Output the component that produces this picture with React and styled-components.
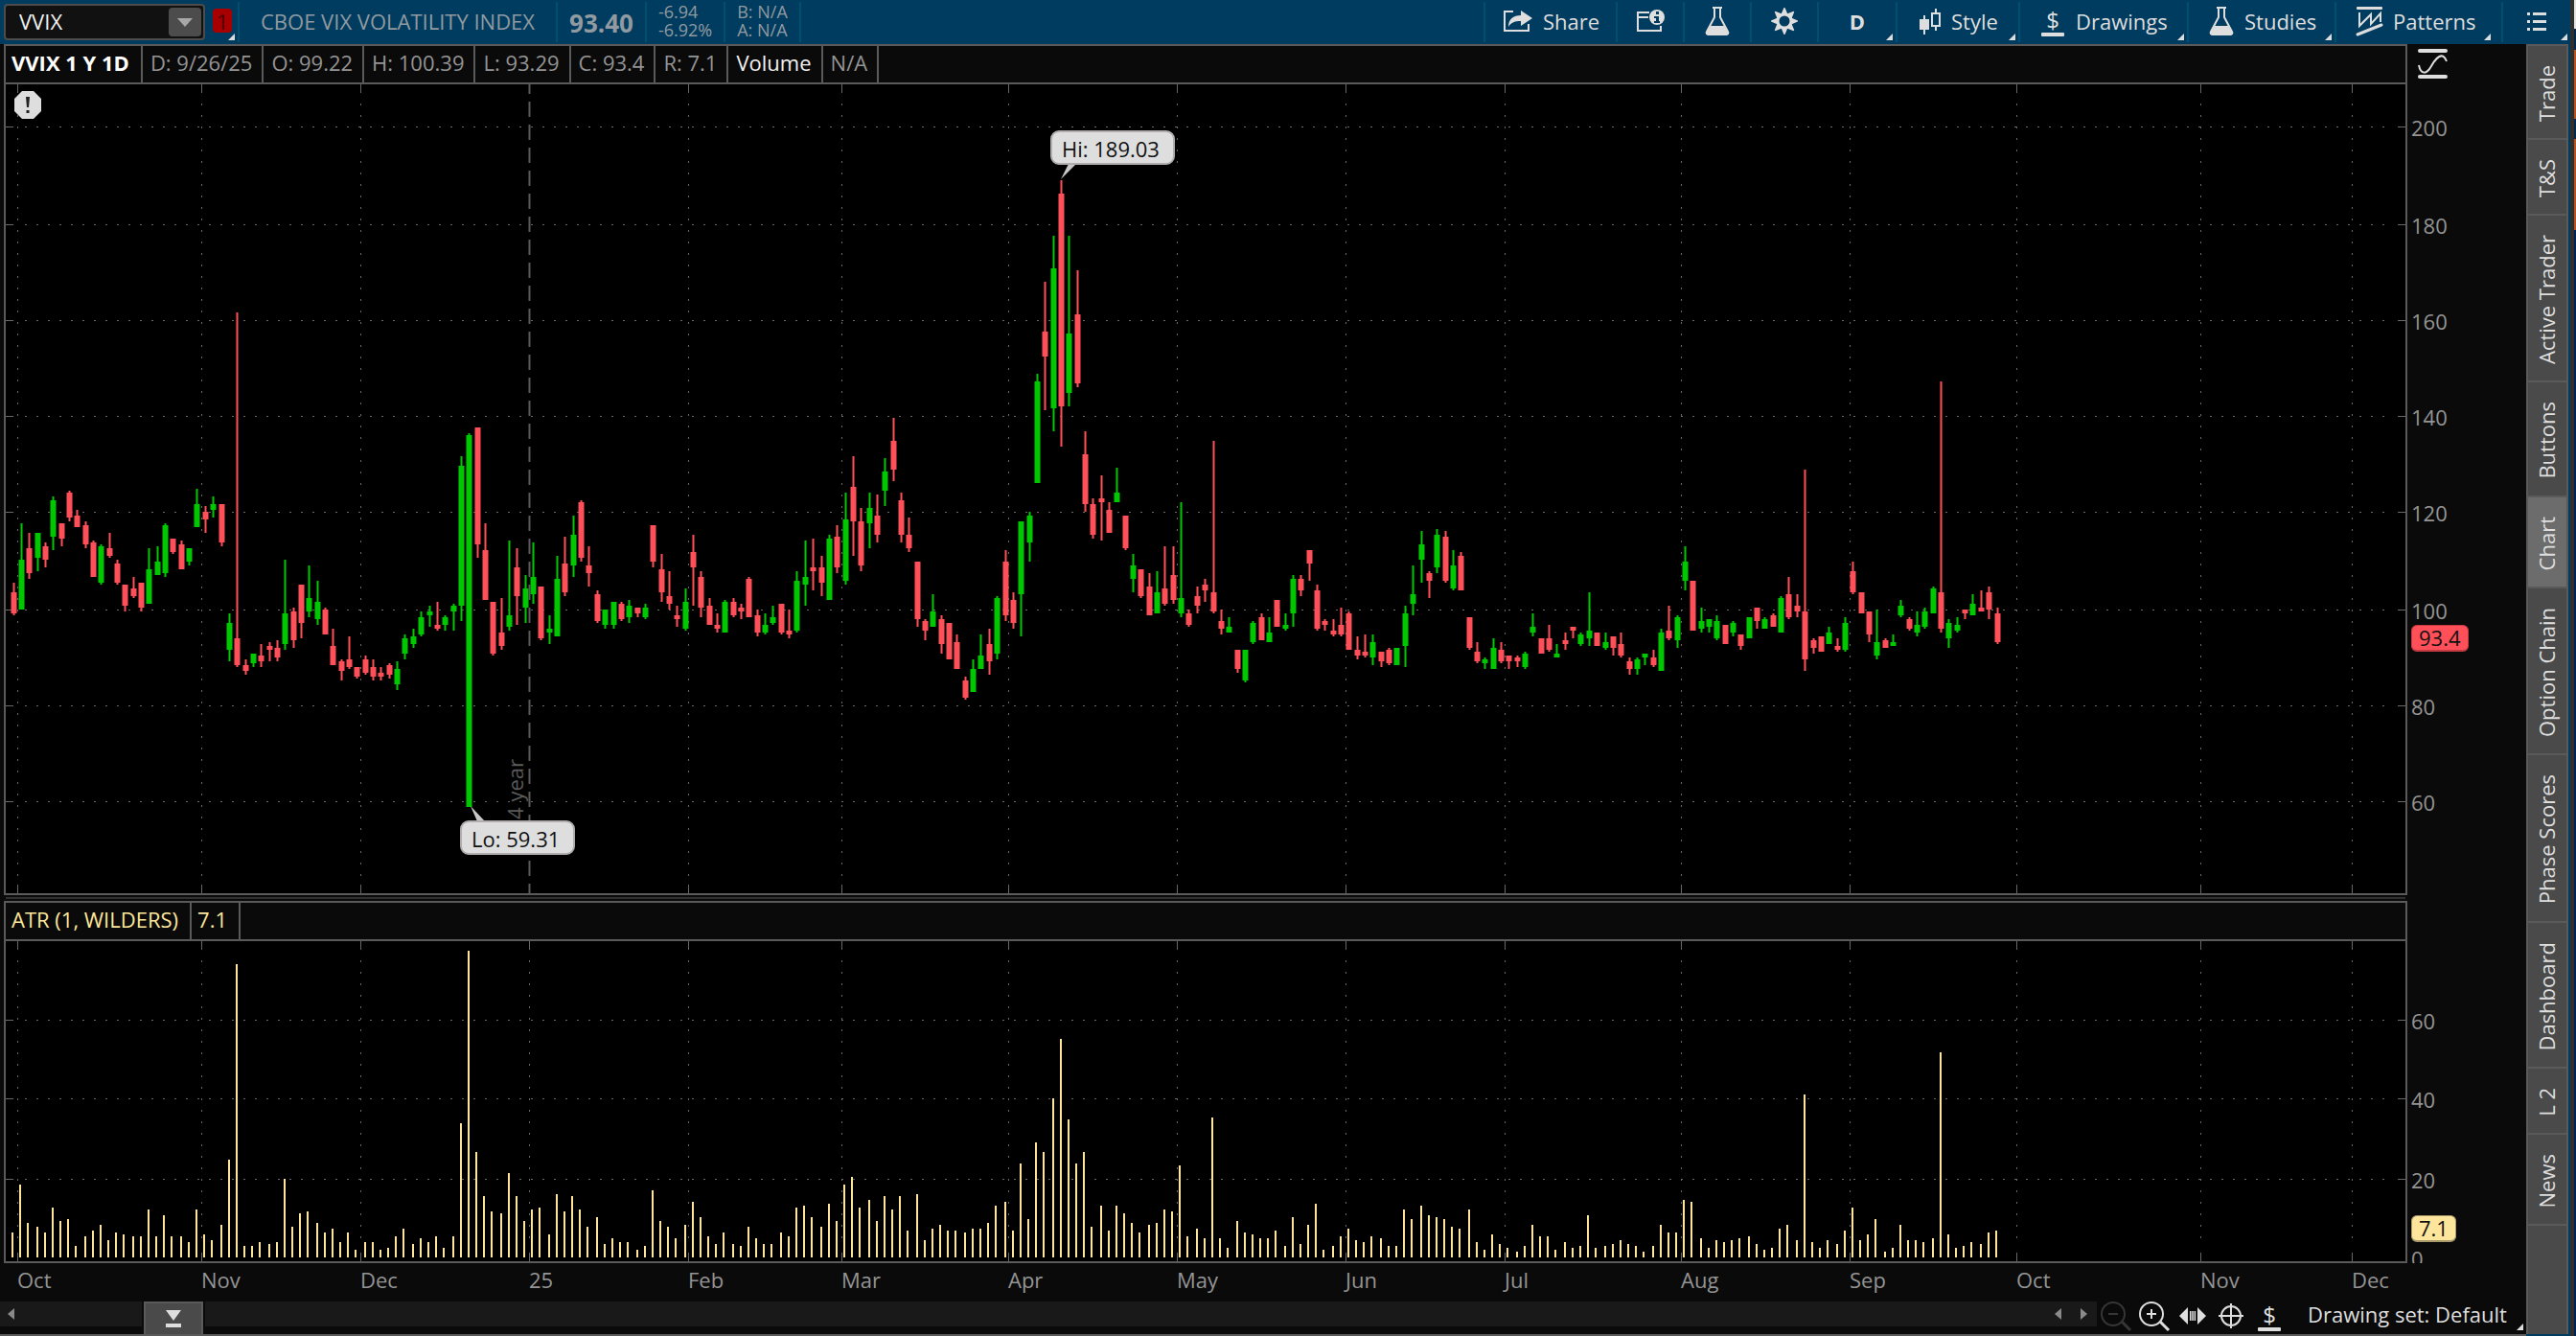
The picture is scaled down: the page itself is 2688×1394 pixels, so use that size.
import React from "react";
import styled, { createGlobalStyle, css } from "styled-components";

/* ---------- data ---------- */

// One entry per session: direction, then high, body top, body bottom, low (2px chart rows).
const CANDLES = `r304,309,320,321 g273,292,318,318 r278,286,299,302 g278,278,291,298 r283,285,292,296
g259,261,280,287 r273,273,281,285 r256,257,270,272 r266,269,275,275 r272,274,284,286
r282,283,301,301 g284,285,304,305 r278,286,290,291 r292,294,304,305 r305,305,316,319
r301,307,311,312 r304,304,317,319 g286,297,315,315 g285,293,300,300 g273,274,299,301
r281,281,288,289 r282,284,297,297 g286,286,293,295 g255,263,275,275 r264,267,271,278
g259,263,266,270 r263,263,283,285 g320,325,339,345 r163,333,347,348 r344,347,350,352
g341,341,346,348 r336,342,345,348 r335,337,339,345 r334,338,343,345 g292,320,336,339
r317,319,334,338 r305,305,325,333 g295,312,319,322 g303,314,323,326 r317,318,331,331
r328,337,347,347 r344,345,350,355 r332,344,348,349 r348,348,353,354 r342,344,351,352
r344,348,353,355 r348,351,353,355 r346,347,352,354 g345,349,357,360 g331,333,341,344
g328,332,336,338 g319,322,331,332 g316,319,321,327 r314,326,328,329 g321,322,326,329
g315,316,319,329 g238,243,316,324 g226,227,421,421 r223,223,284,291 r273,287,313,313
r314,314,341,342 r312,330,337,339 g282,321,327,329 r286,296,311,326 g300,307,317,325
g283,301,310,315 r306,306,333,334 g321,328,330,336 g290,302,332,332 r280,294,309,311
g269,279,295,301 r261,262,291,293 r285,295,299,306 r308,310,324,325 g318,318,326,328
g314,314,326,328 r314,315,323,324 g313,316,322,325 r317,317,320,322 g315,317,322,323
r274,274,293,296 r289,297,309,314 r298,311,315,318 r316,321,323,327 g307,314,328,329
r279,288,296,316 r298,301,317,322 r312,316,326,326 r320,326,328,330 g313,314,330,330
r312,314,321,322 r315,317,319,323 r301,302,322,322 r318,321,330,332 g320,326,330,331
g316,322,325,326 r315,315,330,331 r318,329,331,333 g298,303,329,330 g282,301,305,316
r281,296,298,308 r290,296,304,311 g279,281,313,313 r274,280,296,299 g257,271,303,305
r238,254,272,290 r265,272,295,298 g257,265,273,286 r258,269,279,283 g239,246,256,264
r218,230,245,251 r257,261,279,283 r270,279,286,288 r293,293,323,327 r323,324,329,334
g310,319,327,327 r321,323,336,341 r325,325,344,344 r331,335,349,349 r353,355,364,365
g344,349,361,361 g331,342,349,349 r328,336,345,352 g311,312,341,344 r287,293,321,324
r309,313,325,328 g272,272,310,332 g267,269,283,293 g195,199,252,252 r147,173,186,214
g123,140,213,225 r94,101,212,233 g123,174,205,212 r141,164,200,202 r225,237,263,267
r260,263,279,281 r248,260,262,282 r262,266,278,278 g244,257,262,262 r269,269,286,287
g289,295,302,309 r297,297,311,312 r299,306,321,321 g298,309,320,320 r285,307,315,316
r285,300,313,315 g262,312,320,322 r318,320,326,327 r306,311,316,320 r302,305,308,314
r230,309,319,320 r318,324,328,331 g322,327,330,330 r339,339,349,351 g339,339,355,356
g324,325,335,336 r320,322,334,334 g322,330,335,335 r313,313,327,327 g320,326,328,329
g300,302,320,327 r300,302,308,311 r287,287,294,303 r305,308,328,329 r323,324,326,329
r323,329,331,332 r317,326,331,332 r319,320,339,339 r332,339,342,344 r331,340,342,343
g331,335,343,347 r340,340,345,348 r338,339,346,347 g338,338,347,347 g316,320,337,348
g295,310,315,321 g277,284,292,304 r298,299,303,312 g276,279,296,299 r277,280,303,304
g287,295,307,308 r288,290,308,308 r322,322,338,339 r335,340,345,346 g343,344,346,349
g333,338,349,349 r335,339,345,346 r342,342,345,349 r342,343,345,348 g340,341,348,349
g320,327,330,332 r333,333,341,341 r326,333,339,340 g336,341,343,343 r330,334,336,339
r327,327,329,333 g330,331,336,337 g309,329,333,337 r330,330,337,337 g330,335,338,339
r332,332,338,342 r330,336,342,343 r343,345,349,352 g343,344,349,352 g341,341,343,347
r339,343,347,348 g328,330,350,350 r316,329,333,334 g321,322,334,338 g285,293,303,308
r303,303,329,329 g317,324,328,330 g323,323,327,330 g321,324,333,334 r326,326,336,336
g324,325,330,332 r331,331,337,339 g322,322,333,333 r317,317,324,328 g322,323,328,328
r320,321,327,327 g311,312,330,330 r301,310,322,323 r310,316,319,322 r245,319,344,350
r333,334,338,341 r332,332,340,340 g327,330,336,336 r333,337,339,340 g322,325,339,340
r293,298,309,310 r309,309,320,320 r319,319,331,335 g318,335,342,344 r333,334,338,338
g331,335,337,337 g313,316,321,322 r322,323,328,329 g319,326,330,332 g317,319,327,328
g306,307,320,320 r199,309,328,330 g323,325,333,338 g322,326,329,330 r318,318,320,323
g310,315,321,321 r308,317,319,319 r306,309,318,323 r317,320,335,336`
  .split(/\s+/)
  .map((s) => {
    const [high, top, bottom, low] = s.slice(1).split(",").map(Number);
    return { up: s[0] === "g", high, top, bottom, low };
  });

const TRUE_RANGE = [
  13, 38, 18, 16, 13, 26, 19, 20, 6, 11, 14, 17, 9, 13, 12, 11, 11, 25, 11, 22, 11, 11, 8, 25, 12,
  9, 17, 51, 153, 6, 6, 8, 7, 8, 41, 16, 23, 24, 18, 13, 15, 8, 13, 4, 8, 8, 4, 5, 11, 15,
  7, 10, 8, 11, 5, 11, 70, 160, 55, 32, 24, 23, 44, 32, 19, 25, 26, 12, 33, 24, 32, 25, 16, 21, 7,
  10, 8, 8, 4, 6, 35, 19, 16, 10, 17, 29, 21, 11, 7, 13, 7, 6, 16, 10, 7, 7, 13, 11, 26, 27,
  21, 16, 28, 19, 38, 42, 26, 30, 19, 32, 25, 32, 14, 33, 9, 15, 17, 14, 14, 13, 15, 15, 18, 27, 29,
  14, 49, 20, 60, 55, 83, 114, 72, 49, 55, 16, 27, 14, 27, 23, 18, 13, 17, 18, 25, 24, 48, 11, 15, 10,
  73, 10, 5, 19, 13, 12, 10, 10, 14, 6, 21, 7, 17, 28, 4, 6, 11, 15, 9, 8, 11, 10, 6, 6, 25,
  20, 27, 22, 21, 20, 16, 15, 25, 8, 4, 12, 7, 5, 3, 6, 17, 11, 11, 4, 8, 5, 6, 22, 5, 6,
  7, 9, 7, 6, 3, 6, 17, 13, 13, 30, 29, 10, 5, 9, 8, 9, 10, 11, 7, 4, 5, 15, 17, 9, 85,
  8, 5, 9, 7, 14, 26, 9, 12, 20, 3, 5, 17, 9, 9, 8, 10, 107, 12, 5, 6, 8, 7, 13, 14,
];

const MONTHS = [
  [18, "Oct"], [210, "Nov"], [376, "Dec"], [552, "25"], [718, "Feb"], [878, "Mar"],
  [1052, "Apr"], [1228, "May"], [1404, "Jun"], [1570, "Jul"], [1754, "Aug"],
  [1930, "Sep"], [2104, "Oct"], [2296, "Nov"], [2454, "Dec"],
];

const PRICE_TICKS = [
  [132, "200"], [234, "180"], [334, "160"], [434, "140"],
  [534, "120"], [636, "100"], [736, "80"], [836, "60"],
];
const ATR_TICKS = [[1064, "60"], [1146, "40"], [1230, "20"], [1312, "0"]];

const X0 = 6;
const PLOT_W = 2504;
const PRICE = { top: 88, height: 844 };
const ATR = { top: 982, height: 334 };
const STEP = 2070 / 248;

const pctX = (x) => `${((x - X0) / PLOT_W) * 100}%`;
const pctY = (y, plot) => `${((y - plot.top) / plot.height) * 100}%`;

/* ---------- theme ---------- */

const c = {
  blue: "#003c5f",
  blueLine: "#004f6e",
  panel: "#0a0a0a",
  line: "#5a5a5a",
  tab: "#4a4a4a",
  tabOn: "#6c6c6c",
  grey: "#949494",
  light: "#dedede",
  gold: "#fde69b",
  red: "#ff4f58",
  green: "#00c800",
};

const Global = createGlobalStyle`
  *, *::before, *::after { box-sizing: border-box; }
  html, body { margin: 0; background: ${c.panel}; }
  body, button, input {
    font-family: "Open Sans", "Noto Sans", sans-serif;
    font-size: 22px;
    line-height: 30px;
  }
  button { border: 0; padding: 0; margin: 0; background: none; color: inherit; cursor: pointer; }
  svg { display: block; overflow: visible; }
`;

/* ---------- window ---------- */

const Desktop = styled.div`
  display: flex;
  height: 100vh;
  color: ${c.light};
  overflow: hidden;
`;
const Window = styled.div`
  flex: 1;
  min-width: 0;
  display: flex;
  flex-direction: column;
  background: ${c.blue};
`;
const WindowEdge = styled.div`
  flex: 0 0 4px;
  background: #303030;
`;
const DesktopStrip = styled.div`
  flex: 0 0 2px;
  background: linear-gradient(
    #e4e4e4 0 30px, #06264a 30px 52px, #b4531f 52px 124px,
    #06264a 124px 145px, #b4531f 145px 240px, #03234f 240px
  );
`;

/* ---------- toolbar ---------- */

const Toolbar = styled.header`
  flex: 0 0 46px;
  min-height: 0;
  display: flex;
  padding: 2px 0;
`;
const SymbolBox = styled.div`
  display: flex;
  width: 210px;
  margin: 2px 8px 2px 4px;
  padding: 2px;
  background: #111;
  border: 2px solid #4c4c4c;
  border-radius: 4px;
`;
const SymbolInput = styled.input`
  flex: 1;
  min-width: 0;
  height: 30px;
  padding: 0 0 2px 12px;
  border: 0;
  outline: 0;
  background: transparent;
  color: #f0f0f0;
`;
const SymbolDrop = styled.button`
  width: 34px;
  display: grid;
  place-items: center;
  background: #4c4c4c;
  border-radius: 4px;
`;
const cornerMark = css`
  &::after {
    content: "";
    position: absolute;
    right: ${(p) => p.$mark ?? 3}px;
    bottom: 2px;
    border-left: 7px solid transparent;
    border-bottom: 7px solid ${c.light};
  }
`;
const LinkCell = styled.div`
  position: relative;
  width: 28px;
  border-right: 2px solid ${c.blueLine};
  ${cornerMark}
`;
const LinkBadge = styled.button`
  width: 20px;
  height: 25px;
  margin-top: 7px;
  line-height: 24px;
  background: #a80000;
  border-radius: 4px;
  color: #4c0000;
`;
const QuoteCell = styled.div`
  display: flex;
  flex-direction: column;
  justify-content: center;
  padding: 0 ${(p) => p.$pad ?? 12}px 2px;
  border-right: 2px solid ${c.blueLine};
  color: #919aa0;
  white-space: nowrap;
`;
const LastPrice = styled.strong`
  font-size: 26px;
  line-height: 34px;
  padding-top: 4px;
`;
const Small = styled.span`
  font-size: 18px;
  line-height: 19px;
`;
const Spacer = styled.div`
  flex: 1;
`;
const Tool = styled.button`
  position: relative;
  display: flex;
  align-items: center;
  justify-content: ${(p) => (p.$left ? "flex-start" : "center")};
  gap: 11px;
  min-width: ${(p) => p.$min ?? 70}px;
  padding: 0 0 2px ${(p) => p.$left ?? 0}px;
  border-left: 2px solid ${c.blueLine};
  white-space: nowrap;
  ${(p) => p.$menu && cornerMark}
`;

/* ---------- workspace ---------- */

const Body = styled.div`
  flex: 1;
  min-height: 0;
  display: flex;
  padding-right: 2px;
`;
const Workspace = styled.main`
  flex: 1;
  min-width: 0;
  display: flex;
  flex-direction: column;
  background: ${c.panel};
  border-bottom: 2px solid ${c.line};
`;
const Panel = styled.section`
  flex: ${(p) => p.$grow} 1 0;
  min-height: 0;
  display: flex;
  padding-left: 4px;
`;
const PlotFrame = styled.div`
  flex: 1;
  min-width: 0;
  display: flex;
  flex-direction: column;
  border: 2px solid ${c.line};
`;
const Legend = styled.div`
  flex: 0 0 40px;
  display: flex;
  border-bottom: 2px solid ${c.line};
`;
const LegendCell = styled.span`
  padding: ${(p) => (p.$wide ? "0 12px 0 6px" : "0 10px 0 8px")};
  line-height: 34px;
  border-right: 2px solid ${c.line};
  color: ${(p) => p.$color ?? c.grey};
  font-weight: ${(p) => (p.$bold ? 700 : 400)};
  white-space: nowrap;
`;
const Plot = styled.div`
  position: relative;
  flex: 1;
  min-height: 0;
  background: #000;
  > svg { width: 100%; height: 100%; position: absolute; inset: 0; }
`;
const Divider = styled.div`
  flex: 0 0 6px;
  margin: 0 126px 0 6px;
  padding: 2px 0;
  background: #303030 content-box;
`;
const Alert = styled.button`
  position: absolute;
  left: 9px;
  top: 7px;
`;
const Callout = styled.div`
  position: absolute;
  height: 36px;
  padding: 0 14px 0 10px;
  line-height: 34px;
  background: ${c.light};
  border: 2px solid #b0acac;
  border-radius: 9px;
  color: #111;
  white-space: nowrap;
`;
const YearTag = styled.span`
  position: absolute;
  writing-mode: vertical-rl;
  transform: rotate(180deg);
  line-height: 28px;
  color: ${c.line};
`;

const Axis = styled.aside`
  flex: 0 0 124px;
  display: flex;
  flex-direction: column;
`;
const AxisHead = styled.div`
  flex: 0 0 42px;
  padding: 4px 0 0 11px;
`;
const Scale = styled.div`
  position: relative;
  flex: 1;
  margin-bottom: 2px;
  ${(p) => p.$clip && "clip-path: inset(0 0 -2px 0);"}
`;
const Tick = styled.span`
  position: absolute;
  left: 4px;
  transform: translateY(-50%);
  line-height: 28px;
  padding-top: 2px;
  color: ${c.grey};
`;
const PriceTag = styled.output`
  position: absolute;
  left: 4px;
  transform: translateY(-50%);
  height: 28px;
  padding: 0 7px;
  line-height: 24px;
  border-radius: 6px;
  background: ${(p) => p.$bg};
  border: 1px solid ${(p) => p.$edge};
  border-bottom-width: 2px;
  color: #111;
`;

const TimeAxis = styled.div`
  flex: 0 0 40px;
  position: relative;
  margin: 0 126px 0 6px;
`;
const Month = styled.span`
  position: absolute;
  top: 0;
  line-height: 34px;
  color: ${c.grey};
`;

const Footer = styled.footer`
  flex: 0 0 34px;
  display: flex;
  align-items: flex-start;
`;
const Track = styled.div`
  flex: ${(p) => (p.$fill ? "1" : "0 0 148px")};
  height: 26px;
  display: flex;
  align-items: center;
  justify-content: ${(p) => (p.$fill ? "flex-end" : "flex-start")};
  gap: 20px;
  padding: 0 10px 0 8px;
  background: #191919;
`;
const Thumb = styled.button`
  flex: 0 0 62px;
  height: 34px;
  margin: 0 2px;
  display: grid;
  place-items: center;
  background: ${c.tab};
  border: 2px solid ${c.line};
  border-bottom: 0;
`;
const Controls = styled.div`
  flex: 0 0 448px;
  height: 30px;
  display: flex;
  align-items: center;
`;
const IconButton = styled.button`
  width: 40px;
  display: flex;
  justify-content: center;
`;
const DrawingSet = styled.button`
  position: relative;
  flex: 1;
  height: 34px;
  padding: 0 0 4px 20px;
  text-align: left;
  line-height: 28px;
  white-space: nowrap;
  ${cornerMark}
`;

/* ---------- side tabs ---------- */

const Side = styled.nav`
  flex: 0 0 44px;
  display: flex;
  flex-direction: column;
  margin-bottom: 2px;
  background: ${c.tab};
  border: 2px solid ${c.line};
  border-bottom: 0;
`;
const SideTab = styled.button`
  display: flex;
  justify-content: center;
  align-items: center;
  padding: 20px 0 17px;
  border-bottom: 2px solid ${c.line};
  background: ${(p) => (p.$on ? c.tabOn : "transparent")};
  span {
    writing-mode: vertical-rl;
    transform: rotate(180deg);
    line-height: 32px;
    padding-left: 2px;
    white-space: nowrap;
  }
`;

/* ---------- icons ---------- */

const Icon = ({ w, h, children, color = c.light }) => (
  <svg width={w} height={h} viewBox={`0 0 ${w} ${h}`} fill={color} stroke="none" aria-hidden="true">
    {children}
  </svg>
);
const line = (extra) => ({ fill: "none", stroke: c.light, strokeWidth: 2, ...extra });

const ShareIcon = () => (
  <Icon w={30} h={22}>
    <path d="M10 1H1v20h25v-7" {...line()} />
    <path d="M18 0l12 8-12 8v-5C12 11 8 12 5 17 5 9 10 5 18 5z" />
  </Icon>
);
const InfoCardIcon = () => (
  <Icon w={30} h={24}>
    <path d="M14 3H2v19h24v-5M2 8h11" {...line()} />
    <circle cx="22" cy="8" r="8" />
    <rect x="21" y="2" width="3" height="3" fill={c.blue} />
    <path d="M19 7h5v5h1v2h-6v-2h2V9h-2z" fill={c.blue} />
  </Icon>
);
const FlaskIcon = () => (
  <Icon w={26} h={32}>
    <path d="M8 2h10M10 2v10L2 27c-1 2 0 3 2 3h18c2 0 3-1 2-3L16 12V2" {...line()} />
    <path d="M6 21h14l5 8-2 2H3l-2-2z" />
  </Icon>
);
const GearIcon = () => (
  <Icon w={28} h={28}>
    <circle cx="14" cy="14" r="7" {...line({ strokeWidth: 3 })} />
    {[0, 45, 90, 135, 180, 225, 270, 315].map((a) => (
      <path key={a} d="M10.500 7L13.500 0h1L17.500 7z" transform={`rotate(${a} 14 14)`} />
    ))}
  </Icon>
);
const CandlesIcon = () => (
  <Icon w={22} h={28}>
    <path d="M0 12h10v11H0zM4 8h2v20H4z" />
    <path d="M13 6h8v13h-8zM17 6V1M17 19v5" {...line()} />
  </Icon>
);
const DollarIcon = () => (
  <Icon w={26} h={32}>
    <text x="13" y="24" textAnchor="middle" fontSize="24">$</text>
    <rect x="1" y="28" width="24" height="4" rx="1" />
  </Icon>
);
const PatternsIcon = () => (
  <Icon w={27} h={31}>
    <rect width="27" height="3" rx="1" />
    <path d="M3 6v14L15 8v10L25 7v9" {...line()} />
    <path d="M1 29L26 19" {...line({ strokeWidth: 3, strokeLinecap: "round" })} />
  </Icon>
);
const ListIcon = () => (
  <Icon w={20} h={20}>
    {[1, 9, 17].map((y) => (
      <path key={y} d={`M0 ${y}h3v3H0zM6 ${y}h14v3H6z`} />
    ))}
  </Icon>
);
const AxisIcon = () => (
  <Icon w={31} h={32}>
    <rect y="1" width="31" height="4" rx="2" />
    <rect y="28" width="31" height="4" rx="2" />
    <path d="M1 18c2 10 8 10 13 1S26 3 30 14" {...line()} />
  </Icon>
);
const AlertIcon = () => (
  <Icon w={28} h={30}>
    <path d="M8 0h12l8 8v13l-8 8H8l-8-8V8z" />
    <path d="M12 6h4l-1 11h-2zM12.500 20h3v3h-3z" fill="#222" />
  </Icon>
);
const Arrow = ({ dir }) => (
  <Icon w={7} h={12} color="#8a8a8a">
    <path d={dir === "left" ? "M7 0v12L0 6z" : "M0 0v12l7-6z"} />
  </Icon>
);
const ThumbIcon = () => (
  <Icon w={16} h={18}>
    <path d="M0 0h16L8 11zM0 14h16v4H0z" />
  </Icon>
);
const ZoomIcon = ({ plus, color }) => (
  <Icon w={32} h={32}>
    <circle cx="13" cy="14" r="12" {...line({ stroke: color })} />
    <path d="M22 22l9 9" {...line({ stroke: color, strokeWidth: 3 })} />
    <path d={plus ? "M8 14h10M13 9v10" : "M8 14h10"} {...line({ stroke: color })} />
  </Icon>
);
const SpreadIcon = () => (
  <Icon w={28} h={18}>
    <path d="M9 0v18L0 9zM19 0v18l9-9zM11 4h1.500v10H11zM13.300 4h1.500v10h-1.500zM15.600 4h1.500v10h-1.500z" />
  </Icon>
);
const CrosshairIcon = () => (
  <Icon w={26} h={26}>
    <circle cx="13" cy="13" r="10" {...line()} />
    <path d="M13 0v26M0 13h26" {...line()} />
  </Icon>
);

/* ---------- chart parts ---------- */

const Grid = ({ plot, rows }) => {
  const bottom = plot.top + plot.height;
  const right = X0 + PLOT_W;
  return (
    <g stroke="#686868" fill="none">
      {rows.map(([y]) => (
        <g key={y}>
          <path d={`M6 ${y + 0.5}h8M${right - 8} ${y + 0.5}h8`} />
          <path d={`M26 ${y + 0.5}H${right - 20}`} strokeDasharray="2 10" />
        </g>
      ))}
      {MONTHS.map(([x]) => (
        <g key={x}>
          <path d={`M${x + 0.5} ${plot.top}v9M${x + 0.5} ${bottom}v-9`} />
          <path
            d={`M${x + 0.5} ${plot.top + 20}V${bottom - 18}`}
            strokeDasharray="2 10"
          />
        </g>
      ))}
    </g>
  );
};

const Candle = ({ i, up, high, top, bottom, low }) => {
  const x = Math.round(13.5 + STEP * i) + 0.5;
  return (
    <g fill={up ? c.green : c.red}>
      <rect x={x - 1} y={high * 2} width="2" height={(low - high) * 2} />
      <rect x={x - 3} y={top * 2} width="6" height={(bottom - top) * 2} />
    </g>
  );
};

const PriceChart = () => (
  <svg
    viewBox={`${X0} ${PRICE.top} ${PLOT_W} ${PRICE.height}`}
    preserveAspectRatio="none"
    role="img"
    aria-label="VVIX daily price"
  >
    <Grid plot={PRICE} rows={PRICE_TICKS} />
    {CANDLES.map((d, i) => (
      <Candle key={i} i={i} {...d} />
    ))}
    <path d="M552.500 88v10M552.500 106V932" stroke={c.line} strokeWidth="2" strokeDasharray="16 8" />
    <path d="M1107 187l8-16h8zM491 841l7 16h8z" fill="#c8c8c8" />
  </svg>
);

const RangeChart = () => (
  <svg
    viewBox={`${X0} ${ATR.top} ${PLOT_W} ${ATR.height}`}
    preserveAspectRatio="none"
    role="img"
    aria-label="Average true range"
  >
    <Grid plot={ATR} rows={ATR_TICKS.slice(0, 3)} />
    {TRUE_RANGE.map((v, i) => (
      <rect
        key={i}
        x={2 * Math.round((12 + STEP * i) / 2)}
        y={1312 - v * 2}
        width="2"
        height={v * 2}
        fill={c.gold}
      />
    ))}
  </svg>
);

const TABS = [
  "Trade", "T&S", "Active Trader", "Buttons", "Chart",
  "Option Chain", "Phase Scores", "Dashboard", "L 2", "News",
];

export default function App() {
  return (
    <Desktop>
      <Global />
      <Window>
        <Toolbar>
          <SymbolBox>
            <SymbolInput aria-label="Symbol" defaultValue="VVIX" />
            <SymbolDrop aria-label="Recent symbols">
              <Icon w={16} h={9} color="#a8a8a8"><path d="M0 0h16L8 9z" /></Icon>
            </SymbolDrop>
          </SymbolBox>
          <LinkCell><LinkBadge>1</LinkBadge></LinkCell>
          <QuoteCell $pad={22}>CBOE VIX VOLATILITY INDEX</QuoteCell>
          <QuoteCell><LastPrice>93.40</LastPrice></QuoteCell>
          <QuoteCell><Small>-6.94</Small><Small>-6.92%</Small></QuoteCell>
          <QuoteCell><Small>B: N/A</Small><Small>A: N/A</Small></QuoteCell>
          <Spacer />
          <Tool $left={19} $min={138}><ShareIcon />Share</Tool>
          <Tool aria-label="Symbol info"><InfoCardIcon /></Tool>
          <Tool aria-label="Edit studies"><FlaskIcon /></Tool>
          <Tool aria-label="Settings"><GearIcon /></Tool>
          <Tool $menu $min={82}><b>D</b></Tool>
          <Tool $menu $left={23} $min={128}><CandlesIcon />Style</Tool>
          <Tool $menu $left={21} $min={176}><DollarIcon />Drawings</Tool>
          <Tool $menu $left={21} $min={154}><FlaskIcon />Studies</Tool>
          <Tool $menu $left={21} $min={174} $mark={11}><PatternsIcon />Patterns</Tool>
          <Tool $menu $min={72} aria-label="Menu"><ListIcon /></Tool>
        </Toolbar>
        <Body>
          <Workspace>
            <Panel $grow={888}>
              <PlotFrame>
                <Legend>
                  <LegendCell $bold $color="#fff" $wide>VVIX 1 Y 1D</LegendCell>
                  <LegendCell>D: 9/26/25</LegendCell>
                  <LegendCell>O: 99.22</LegendCell>
                  <LegendCell>H: 100.39</LegendCell>
                  <LegendCell>L: 93.29</LegendCell>
                  <LegendCell>C: 93.4</LegendCell>
                  <LegendCell>R: 7.1</LegendCell>
                  <LegendCell $color="#f0f0f0">Volume</LegendCell>
                  <LegendCell>N/A</LegendCell>
                </Legend>
                <Plot>
                  <YearTag style={{ left: pctX(523), top: pctY(792, PRICE) }}>2024 year</YearTag>
                  <PriceChart />
                  <Alert aria-label="Chart notice"><AlertIcon /></Alert>
                  <Callout style={{ left: pctX(1096), top: pctY(136, PRICE) }}>Hi: 189.03</Callout>
                  <Callout style={{ left: pctX(480), top: pctY(856, PRICE) }}>Lo: 59.31</Callout>
                </Plot>
              </PlotFrame>
              <Axis>
                <AxisHead><button aria-label="Axis settings"><AxisIcon /></button></AxisHead>
                <Scale>
                  {PRICE_TICKS.map(([y, label]) => (
                    <Tick key={label} style={{ top: pctY(y, PRICE) }}>{label}</Tick>
                  ))}
                  <PriceTag $bg={c.red} $edge="#c43a42" style={{ top: pctY(666, PRICE) }}>93.4</PriceTag>
                </Scale>
              </Axis>
            </Panel>
            <Divider />
            <Panel $grow={378}>
              <PlotFrame>
                <Legend>
                  <LegendCell $color={c.gold} $wide>ATR (1, WILDERS)</LegendCell>
                  <LegendCell $color={c.gold} $wide>7.1</LegendCell>
                </Legend>
                <Plot><RangeChart /></Plot>
              </PlotFrame>
              <Axis>
                <AxisHead />
                <Scale $clip>
                  {ATR_TICKS.map(([y, label]) => (
                    <Tick key={label} style={{ top: pctY(y, ATR) }}>{label}</Tick>
                  ))}
                  <PriceTag $bg={c.gold} $edge="#a89a6a" style={{ top: pctY(1282, ATR) }}>7.1</PriceTag>
                </Scale>
              </Axis>
            </Panel>
            <TimeAxis>
              {MONTHS.map(([x, label]) => (
                <Month key={x} style={{ left: pctX(x) }}>{label}</Month>
              ))}
            </TimeAxis>
            <Footer>
              <Track><button aria-label="Scroll left"><Arrow dir="left" /></button></Track>
              <Thumb aria-label="Scroll position"><ThumbIcon /></Thumb>
              <Track $fill>
                <button aria-label="Step left"><Arrow dir="left" /></button>
                <button aria-label="Step right"><Arrow dir="right" /></button>
              </Track>
              <Controls>
                <IconButton aria-label="Zoom out"><ZoomIcon color="#363636" /></IconButton>
                <IconButton aria-label="Zoom in"><ZoomIcon plus color={c.light} /></IconButton>
                <IconButton aria-label="Expand"><SpreadIcon /></IconButton>
                <IconButton aria-label="Crosshair"><CrosshairIcon /></IconButton>
                <IconButton aria-label="Drawing tools"><DollarIcon /></IconButton>
                <DrawingSet>Drawing set: Default</DrawingSet>
              </Controls>
            </Footer>
          </Workspace>
          <Side>
            {TABS.map((t) => (
              <SideTab key={t} $on={t === "Chart"}><span>{t}</span></SideTab>
            ))}
          </Side>
        </Body>
      </Window>
      <WindowEdge />
      <DesktopStrip />
    </Desktop>
  );
}
